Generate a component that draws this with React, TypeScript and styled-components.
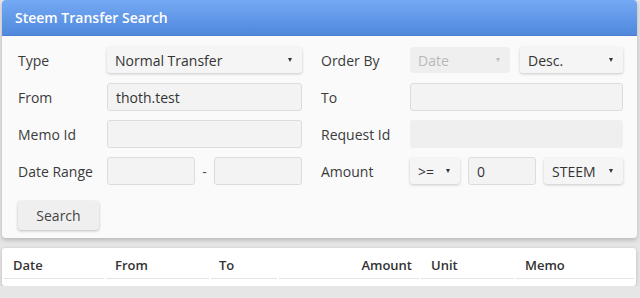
import React from "react";
import styled, { createGlobalStyle } from "styled-components";

const GlobalStyle = createGlobalStyle`
  body {
    margin: 0;
    background: #e6e6e6;
    font-family: "Open Sans", "Liberation Sans", sans-serif;
    color: #333;
  }
`;

const Page = styled.div`
  padding: 0 3px 0 2px;
`;

const Panel = styled.div`
  background: #fafafa;
  border-radius: 4px;
  box-shadow: 0 2px 5px rgba(0, 0, 0, 0.22);
  overflow: hidden;
`;

const Header = styled.div`
  height: 36px;
  display: flex;
  align-items: center;
  padding-left: 13px;
  background: linear-gradient(#74a9f4, #5088dc);
  border-bottom: 1px solid #4a7fcf;
  box-sizing: border-box;
  color: #fff;
  font-size: 14px;
  font-weight: 600;
`;

const Form = styled.div`
  display: grid;
  grid-template-columns: 89px 195px 108px 213px;
  grid-auto-rows: 28px;
  row-gap: 9px;
  align-items: center;
  padding: 10px 0 0 16px;
`;

const Label = styled.label<{ $right?: boolean }>`
  font-size: 14px;
  color: #3a3a3a;
  padding-left: ${(p) => (p.$right ? "19px" : "0")};
`;

const Input = styled.input<{ $width?: number; $readonly?: boolean }>`
  box-sizing: border-box;
  width: ${(p) => (p.$width ? `${p.$width}px` : "100%")};
  height: 28px;
  border: 1px solid ${(p) => (p.$readonly ? "#efefef" : "#dcdcdc")};
  border-radius: 3px;
  background: ${(p) => (p.$readonly ? "#efefef" : "#f3f3f3")};
  font-family: inherit;
  font-size: 14px;
  color: #333;
  padding: 0 8px;
  outline: none;
`;

const SelectBox = styled.div<{ $width: number; $disabled?: boolean }>`
  position: relative;
  box-sizing: border-box;
  width: ${(p) => p.$width}px;
  height: 26px;
  border-radius: 3px;
  background: ${(p) => (p.$disabled ? "#efefef" : "#f5f5f5")};
  box-shadow: ${(p) => (p.$disabled ? "none" : "0 1px 3px rgba(0,0,0,0.2)")};
  color: ${(p) => (p.$disabled ? "#b9b9b9" : "#333")};
  font-size: 14px;
  display: flex;
  align-items: center;
  padding-left: 8px;

  &::after {
    content: "";
    position: absolute;
    right: 10px;
    top: 11px;
    border-left: 2.5px solid transparent;
    border-right: 2.5px solid transparent;
    border-top: 4px solid ${(p) => (p.$disabled ? "#bdbdbd" : "#333")};
  }
`;

const Group = styled.div<{ $gap: number }>`
  display: flex;
  align-items: center;
  gap: ${(p) => p.$gap}px;
`;

const Dash = styled.span`
  width: 19px;
  text-align: center;
  font-size: 14px;
  color: #555;
`;

const Actions = styled.div`
  padding: 16px 0 8px 16px;
`;

const Button = styled.button`
  width: 81px;
  height: 29px;
  border: none;
  border-radius: 3px;
  background: #efefef;
  box-shadow: 0 1px 3px rgba(0, 0, 0, 0.25);
  font-family: inherit;
  font-size: 14px;
  color: #444;
`;

const TableCard = styled.div`
  margin-top: 10px;
  margin-right: 1px;
  background: #fff;
  border-radius: 3px;
  box-shadow: 0 1px 4px rgba(0, 0, 0, 0.2);
  padding-bottom: 7px;
`;

const Table = styled.table`
  width: 100%;
  table-layout: fixed;
  border-collapse: separate;
  border-spacing: 2px 0;
`;

const Th = styled.th<{ $w?: number; $align?: string; $pl: number }>`
  box-sizing: border-box;
  width: ${(p) => (p.$w ? `${p.$w}px` : "auto")};
  text-align: ${(p) => p.$align || "left"};
  font-size: 13px;
  font-weight: 600;
  color: #333;
  height: 31px;
  padding: 4px 7px 0 ${(p) => p.$pl}px;
  border-bottom: 1px solid #e4e4e4;
`;

const columns: { name: string; w?: number; pl: number; align?: string }[] = [
  { name: "Date", w: 100, pl: 9 },
  { name: "From", w: 103, pl: 9 },
  { name: "To", w: 66, pl: 8 },
  { name: "Amount", w: 140, pl: 8, align: "right" },
  { name: "Unit", w: 93, pl: 10 },
  { name: "Memo", pl: 9 },
];

export default function App() {
  return (
    <Page>
      <GlobalStyle />
      <Panel>
        <Header>Steem Transfer Search</Header>
        <Form>
          <Label>Type</Label>
          <SelectBox $width={195}>Normal Transfer</SelectBox>
          <Label $right>Order By</Label>
          <Group $gap={10}>
            <SelectBox $width={100} $disabled>
              Date
            </SelectBox>
            <SelectBox $width={103}>Desc.</SelectBox>
          </Group>

          <Label>From</Label>
          <Input defaultValue="thoth.test" />
          <Label $right>To</Label>
          <Input />

          <Label>Memo Id</Label>
          <Input />
          <Label $right>Request Id</Label>
          <Input $readonly disabled />

          <Label>Date Range</Label>
          <Group $gap={0}>
            <Input $width={88} />
            <Dash>-</Dash>
            <Input $width={88} />
          </Group>
          <Label $right>Amount</Label>
          <Group $gap={8}>
            <SelectBox $width={50}>&gt;=</SelectBox>
            <Input $width={68} defaultValue="0" />
            <SelectBox $width={79}>STEEM</SelectBox>
          </Group>
        </Form>
        <Actions>
          <Button>Search</Button>
        </Actions>
      </Panel>
      <TableCard>
        <Table>
          <thead>
            <tr>
              {columns.map((c) => (
                <Th key={c.name} $w={c.w} $pl={c.pl} $align={c.align}>
                  {c.name}
                </Th>
              ))}
            </tr>
          </thead>
        </Table>
      </TableCard>
    </Page>
  );
}
